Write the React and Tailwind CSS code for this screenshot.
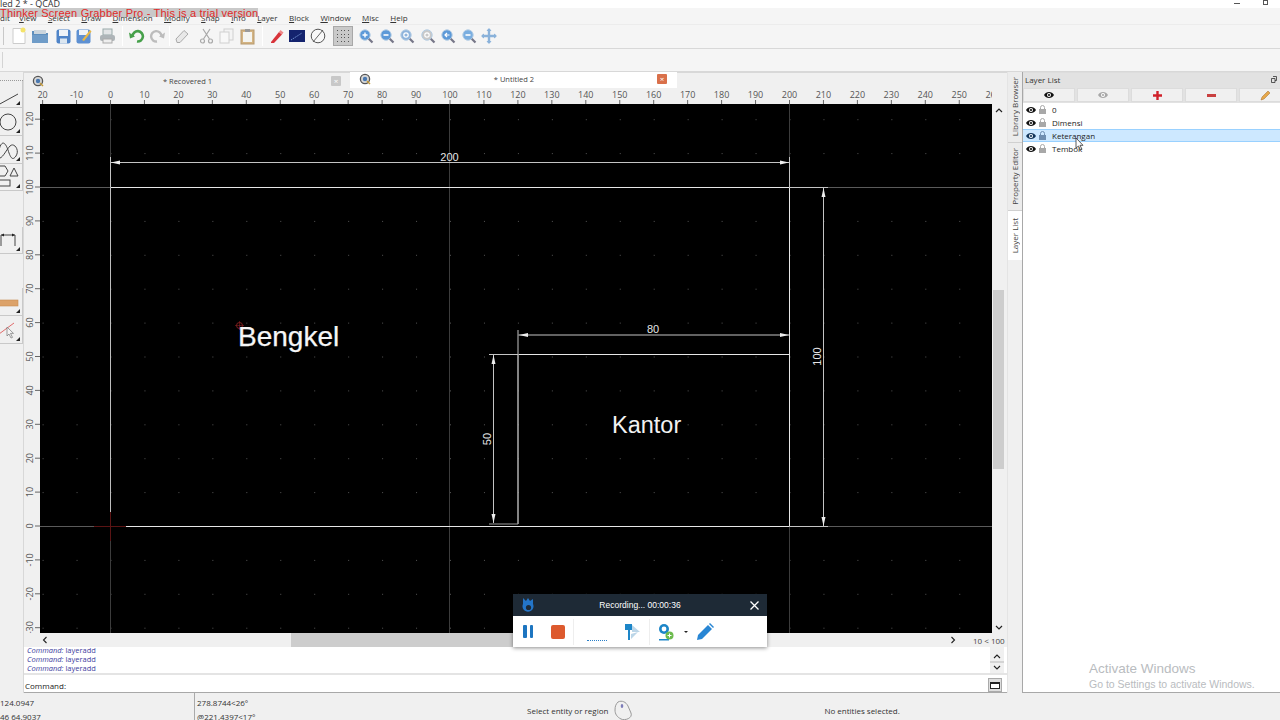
import React from "react";

const F = "font-['Open_Sans','Liberation_Sans',sans-serif]";
const X0 = 110.5, PX = 3.395, Y0 = 526, PY = 3.39;

function Sep() {
  return <div className="w-px h-[20px] bg-[#d4d4d4] border-r border-white" />;
}

function Mag({ c = "#5d9ad8", sym = "+" }) {
  return (
    <svg width="16" height="16" viewBox="0 0 16 16">
      <path d="M10 10l4.5 4.5" stroke="#778" strokeWidth="2.2" />
      <circle cx="7" cy="7" r="5.2" fill={c} stroke="#b4cde4" strokeWidth="1" />
      {sym === "+" && <path d="M4.5 7h5M7 4.5v5" stroke="#fff" strokeWidth="1.4" />}
      {sym === "-" && <path d="M4.5 7h5" stroke="#fff" strokeWidth="1.6" />}
      {sym === "o" && <circle cx="7" cy="7" r="2.2" fill="none" stroke="#fff" strokeWidth="1.2" />}
      {sym === "<" && <path d="M9.5 7H5M7 5L5 7l2 2" stroke="#fff" strokeWidth="1.2" fill="none" />}
    </svg>
  );
}

const tools = [
  <svg width="16" height="18" viewBox="0 0 16 18"><path d="M2 1.5h8l4 4v11H2z" fill="#fff" stroke="#ccc" /><circle cx="12" cy="3" r="2.5" fill="#f4e36a" /></svg>,
  <svg width="18" height="16" viewBox="0 0 18 16"><path d="M1 3h6l1 2h9v10H1z" fill="#5f8fbd" /><path d="M3 2h12v4H3z" fill="#cbd5dd" /><path d="M1 7h16v8H1z" fill="#6f9cc8" /></svg>,
  "gap3",
  <svg width="15" height="15" viewBox="0 0 15 15"><rect x=".5" y=".5" width="14" height="14" rx="2" fill="#4f84c8" /><rect x="3" y="1" width="9" height="6" fill="#eef3f8" /><rect x="4" y="9.5" width="7" height="5" fill="#dbe6f0" /></svg>,
  <svg width="16" height="16" viewBox="0 0 16 16"><rect x=".5" y="1.5" width="14" height="14" rx="2" fill="#5d90d2" /><rect x="3" y="2" width="9" height="5" fill="#eef3f8" /><path d="M6 12L14 2l1.5 1.5L8 13z" fill="#e8b845" /></svg>,
  "gap3",
  <svg width="17" height="16" viewBox="0 0 17 16"><rect x="4" y="1" width="9" height="6" fill="#e2e4e6" stroke="#9aa" /><rect x="1" y="7" width="15" height="6" rx="2" fill="#aeb4b8" /><rect x="4" y="11" width="9" height="4" fill="#eee" stroke="#aaa" /></svg>,
  "gap4",
  "sep",
  "gap4",
  <svg width="16" height="14" viewBox="0 0 16 14"><path d="M3.5 7A5.2 5.2 0 1 1 8 12.5" fill="none" stroke="#46a04a" strokeWidth="2.6" /><path d="M0 3.5l1 6 5-2z" fill="#46a04a" /></svg>,
  <svg width="16" height="14" viewBox="0 0 16 14"><path d="M12.5 7A5.2 5.2 0 1 0 8 12.5" fill="none" stroke="#bcbcbc" strokeWidth="2.4" /><path d="M16 3.5l-1 6-5-2z" fill="#bcbcbc" /></svg>,
  "gap1",
  "sep",
  "gap2",
  <svg width="14" height="15" viewBox="0 0 14 15"><path d="M1 10L9 1.5l4 3.5-8 8.5H2z" fill="#e8e8e8" stroke="#aaa" /></svg>,
  "gap4",
  <svg width="15" height="16" viewBox="0 0 15 16"><path d="M11 1L4.5 11M4 1l6.5 10" stroke="#a8a8a8" strokeWidth="1.2" /><circle cx="3.5" cy="13" r="2" fill="none" stroke="#aaa" strokeWidth="1.2" /><circle cx="11.5" cy="13" r="2" fill="none" stroke="#aaa" strokeWidth="1.2" /></svg>,
  <svg width="15" height="16" viewBox="0 0 15 16"><rect x="5" y="1" width="9" height="11" fill="#f4f4f4" stroke="#d0d0d0" /><rect x="1" y="4" width="9" height="11" fill="#f8f8f8" stroke="#d0d0d0" /></svg>,
  <svg width="15" height="17" viewBox="0 0 15 17"><rect x="1" y="2" width="13" height="14" fill="#d4b483" stroke="#b79a6e" /><rect x="3" y="4" width="9" height="10" fill="#f4f4f0" /><rect x="5" y="1" width="5" height="3" fill="#9a9a9a" /></svg>,
  "gap4",
  "sep",
  "gap4",
  <svg width="14" height="15" viewBox="0 0 14 15"><path d="M1 13L9 3l3 2.5-8 8.5H1z" fill="#d8333a" /><path d="M9 3l1.5-2 3 2.5-1.5 2z" fill="#e88" /></svg>,
  <svg width="16" height="12" viewBox="0 0 16 12"><rect width="16" height="12" fill="#14236e" /><path d="M2 10L13 3" stroke="#8db4f0" strokeWidth=".8" strokeDasharray="1.5 1" /></svg>,
  <svg width="16" height="16" viewBox="0 0 16 16"><circle cx="8" cy="8" r="6.8" fill="#f8f8f8" stroke="#555" strokeWidth="1" /><path d="M3 14L13 2" stroke="#555" strokeWidth=".9" /></svg>,
  "grid",
  <Mag sym="+" />,
  <Mag sym="-" />,
  <Mag sym="o" c="#8fb4dc" />,
  <Mag sym="o" c="#c9c9c9" />,
  <Mag sym="<" />,
  <Mag sym="-" c="#7aaee0" />,
  <svg width="16" height="16" viewBox="0 0 16 16"><path d="M8 1v14M1 8h14" stroke="#8ab2da" strokeWidth="2.4" /><path d="M8 0l2.5 3h-5zM8 16l-2.5-3h5zM0 8l3-2.5v5zM16 8l-3 2.5v-5z" fill="#8ab2da" /></svg>,
];

function Toolbar() {
  return (
    <div className="h-[23px] flex items-center pl-[3px] pb-[1px] bg-[#f5f5f5]">
      <div className="w-px h-[18px] bg-[#c8c8c8] mr-[5px]" />
      {tools.map((t, i) => {
        if (t === "gap1") return <div key={i} className="w-[1px]" />;
        if (t === "gap2") return <div key={i} className="w-[2px]" />;
        if (t === "gap3") return <div key={i} className="w-[3px]" />;
        if (t === "gap4") return <div key={i} className="w-[4px]" />;
        if (t === "sep") return <Sep key={i} />;
        if (t === "grid")
          return (
            <div key={i} className="w-[20px] h-[20px] ml-[5px] mr-[3px] bg-[#c9c9c9] border border-[#a8a8a8] grid grid-cols-4 place-items-center p-[2px]">
              {Array.from({ length: 16 }).map((_, k) => (
                <span key={k} className="w-[1px] h-[1px] bg-[#555]" />
              ))}
            </div>
          );
        return (
          <div key={i} className="w-[20.5px] h-[20px] flex items-center justify-center">
            {t}
          </div>
        );
      })}
    </div>
  );
}

const menu = ["View", "Select", "Draw", "Dimension", "Modify", "Snap", "Info", "Layer", "Block", "Window", "Misc", "Help"];

function Tile({ children, className = "" }) {
  return (
    <div className={`relative w-[23px] bg-[#f0f0f0] border-r border-b border-[#c9c9c9] overflow-hidden ${className}`}>
      {children}
      <span className="absolute right-[2px] bottom-[2px] w-0 h-0 border-l-[4px] border-l-transparent border-b-[4px] border-b-[#222]" />
    </div>
  );
}

function LeftBar() {
  return (
    <div className="w-[24px] shrink-0 bg-[#f0f0f0] border-r border-[#d8d8d8] flex flex-col">
      <div className="h-[9px] border-b border-dotted border-[#999]" />
      <Tile className="h-[27px]">
        <svg width="23" height="27" viewBox="0 0 23 27"><path d="M-2 24L18 13" stroke="#444" strokeWidth="1" /></svg>
      </Tile>
      <Tile className="h-[28px]">
        <svg width="23" height="28" viewBox="0 0 23 28"><circle cx="8" cy="14" r="8" fill="none" stroke="#444" strokeWidth="1" /></svg>
      </Tile>
      <Tile className="h-[28px]">
        <svg width="23" height="28" viewBox="0 0 23 28"><path d="M-1 14C2 2 6 8 8 14S12 26 16 20 14 6 10 10 2 24-2 22" fill="none" stroke="#444" strokeWidth="1" /></svg>
      </Tile>
      <Tile className="h-[27px]">
        <svg width="23" height="27" viewBox="0 0 23 27"><path d="M0 2h5l3 5-3 5H0" fill="none" stroke="#444" /><path d="M14 4l4 8h-8z" fill="none" stroke="#444" /><rect x="-2" y="16" width="12" height="6" fill="none" stroke="#444" /></svg>
      </Tile>
      <div className="h-[36px]" />
      <Tile className="h-[27px]">
        <svg width="23" height="27" viewBox="0 0 23 27"><path d="M1 8h14M1 19V8M15 19V8" fill="none" stroke="#444" /><path d="M1 8l3-1.5v3zM15 8l-3-1.5v3z" fill="#222" /></svg>
      </Tile>
      <div className="h-[34px]" />
      <Tile className="h-[28px]">
        <svg width="23" height="28" viewBox="0 0 23 28"><rect x="-1" y="12" width="19" height="6" fill="#dca269" stroke="#c88c50" strokeWidth=".6" /></svg>
      </Tile>
      <Tile className="h-[28px]">
        <svg width="23" height="28" viewBox="0 0 23 28"><path d="M-1 18L14 7" stroke="#e06a6a" strokeWidth="1" /><path d="M7 11l0 9 2-2 2 4 1.5-.6-2-4h3z" fill="#f4f4f4" stroke="#777" strokeWidth=".7" /></svg>
      </Tile>
      <div className="flex-1" />
    </div>
  );
}

function HRuler() {
  const ticks = [];
  for (let u = -20; u <= 260; u += 10) ticks.push(u);
  return (
    <svg width="968" height="16" viewBox="0 0 968 16" className="block">
      {ticks.map((u) => {
        const x = X0 + u * PX - 24;
        const label = u === -20 ? "20" : u;
        return (
          <g key={u}>
            <line x1={x} x2={x} y1="12" y2="16" stroke="#666" strokeWidth="1" />
            <text x={x} y="10" textAnchor="middle" fontSize="9" fill="#555" fontFamily="Open Sans">{label}</text>
          </g>
        );
      })}
    </svg>
  );
}

function VRuler() {
  const ticks = [];
  for (let u = -30; u <= 120; u += 10) ticks.push(u);
  return (
    <svg width="16" height="529" viewBox="0 0 16 529" className="block shrink-0">
      {ticks.map((u) => {
        const y = Y0 - u * PY - 104;
        return (
          <g key={u}>
            <line x1="11" x2="16" y1={y} y2={y} stroke="#666" strokeWidth="1" />
            <text transform={`translate(9 ${y}) rotate(-90)`} textAnchor="middle" fontSize="9" fill="#555" fontFamily="Open Sans">{u}</text>
          </g>
        );
      })}
    </svg>
  );
}

function Arrow({ x, y, d }) {
  const p = {
    r: `M${x} ${y}l-9-2v4z`,
    l: `M${x} ${y}l9-2v4z`,
    u: `M${x} ${y}l-2 9h4z`,
    d: `M${x} ${y}l-2-9h4z`,
  }[d];
  return <path d={p} fill="#eee" />;
}

function Drawing() {
  const O = (x) => x - 40;
  const T = (y) => y - 104;
  const dots = [];
  for (let i = -20; i <= 25; i++)
    for (let j = -3; j <= 12; j++) dots.push([X0 + i * 10 * PX - 40, Y0 - j * 10 * PY - 104]);
  const L = ({ a, b, c, d, s = "#e8e8e8", w = 1 }) => (
    <line x1={O(a)} x2={O(c)} y1={T(b)} y2={T(d)} stroke={s} strokeWidth={w} />
  );
  return (
    <svg width="952" height="529" viewBox="0 0 952 529" className="block bg-black shrink-0">
      {dots.map(([x, y], i) => (
        <rect key={i} x={x} y={y} width="1" height="1" fill="#555" />
      ))}
      <L a={40} b={187.5} c={992} d={187.5} s="#5a5a5a" />
      <L a={40} b={526.5} c={992} d={526.5} s="#5a5a5a" />
      <L a={110.5} b={104} c={110.5} d={633} s="#3c3c3c" />
      <L a={449.5} b={104} c={449.5} d={633} s="#3c3c3c" />
      <L a={789.5} b={104} c={789.5} d={633} s="#3c3c3c" />

      <L a={110.5} b={187.5} c={789.5} d={187.5} s="#e6e6e6" />
      <L a={110.5} b={526.5} c={789.5} d={526.5} s="#e6e6e6" />
      <L a={110.5} b={187.5} c={110.5} d={526.5} s="#bdbdbd" />
      <L a={789.5} b={187.5} c={789.5} d={526.5} s="#e6e6e6" />
      <L a={518.5} b={354.5} c={789.5} d={354.5} s="#e6e6e6" />
      <L a={518} b={354} c={518} d={524} s="#b0b0b0" w={1.5} />

      <L a={94} b={526.5} c={126} d={526.5} s="#5a1414" />
      <L a={110.5} b={512} c={110.5} d={541} s="#5a1414" />

      <L a={110.5} b={157} c={110.5} d={187} s="#c4c4c4" />
      <L a={789.5} b={157} c={789.5} d={187} s="#c4c4c4" />
      <L a={111} b={162.5} c={789} d={162.5} s="#c4c4c4" />
      <Arrow x={O(111)} y={T(162.5)} d="l" />
      <Arrow x={O(789)} y={T(162.5)} d="r" />
      <text x={O(449.5)} y={T(161)} textAnchor="middle" fontSize="11" fill="#e6e6e6" fontFamily="Liberation Sans">200</text>

      <L a={790} b={187.5} c={828} d={187.5} s="#c4c4c4" />
      <L a={790} b={526.5} c={828} d={526.5} s="#c4c4c4" />
      <L a={823.5} b={188} c={823.5} d={526} s="#c4c4c4" />
      <Arrow x={O(823.5)} y={T(188)} d="u" />
      <Arrow x={O(823.5)} y={T(526)} d="d" />
      <text transform={`translate(${O(821)} ${T(356.5)}) rotate(-90)`} textAnchor="middle" fontSize="11" fill="#e6e6e6" fontFamily="Liberation Sans">100</text>

      <L a={518} b={330} c={518} d={354} s="#c4c4c4" />
      <L a={518.5} b={335} c={789} d={335} s="#c4c4c4" />
      <Arrow x={O(519)} y={T(335)} d="l" />
      <Arrow x={O(789)} y={T(335)} d="r" />
      <text x={O(653)} y={T(333)} textAnchor="middle" fontSize="11" fill="#e6e6e6" fontFamily="Liberation Sans">80</text>

      <L a={489} b={354.5} c={518} d={354.5} s="#c4c4c4" />
      <L a={489} b={524} c={518} d={524} s="#9c9c9c" />
      <L a={493.5} b={355} c={493.5} d={523} s="#c4c4c4" />
      <Arrow x={O(493.5)} y={T(355)} d="u" />
      <Arrow x={O(493.5)} y={T(523)} d="d" />
      <text transform={`translate(${O(491)} ${T(439)}) rotate(-90)`} textAnchor="middle" fontSize="11" fill="#e6e6e6" fontFamily="Liberation Sans">50</text>

      <circle cx={O(239.5)} cy={T(325.5)} r="3" fill="none" stroke="#8a2020" strokeWidth=".9" />
      <path d={`M${O(235)} ${T(325.5)}h9M${O(239.5)} ${T(321)}v9`} stroke="#8a2020" strokeWidth=".6" />
      <text x={O(238)} y={T(346)} fontSize="28" fill="#f6f6f6" stroke="#f6f6f6" strokeWidth=".25" fontFamily="Liberation Sans">Bengkel</text>
      <text x={O(612)} y={T(433)} fontSize="23.5" fill="#f2f2f2" fontFamily="Liberation Sans">Kantor</text>
    </svg>
  );
}

function Logo() {
  return (
    <svg width="12" height="12" viewBox="0 0 12 12">
      <circle cx="6" cy="6" r="4.6" fill="#d7d7d7" stroke="#555" strokeWidth="1.3" />
      <circle cx="6" cy="6" r="2.2" fill="#4a78b0" />
      <path d="M8 8l3 3" stroke="#c49a3a" strokeWidth="1.5" />
    </svg>
  );
}

function Tabs() {
  return (
    <div className="h-[16px] flex bg-[#f0f0f0] text-[7.5px] text-[#444] leading-[16px]">
      <div className="w-[326px] bg-[#f0f0f0] border-t border-[#d8d8d8] flex items-center pl-[8px]">
        <Logo />
        <div className="flex-1 text-center">* Recovered 1</div>
        <div className="w-[10px] h-[10px] mr-[9px] bg-[#c8c8c8] rounded-[1px] text-white text-[8px] leading-[10px] text-center">×</div>
      </div>
      <div className="w-[327px] bg-white flex items-center pl-[9px] pb-[2px]">
        <Logo />
        <div className="flex-1 text-center">* Untitled 2</div>
        <div className="w-[10px] h-[10px] mr-[10px] bg-[#d9704a] rounded-[1px] text-white text-[8px] leading-[10px] text-center">×</div>
      </div>
      <div className="flex-1 border-t border-[#d8d8d8]" />
    </div>
  );
}

function VScroll() {
  return (
    <div className="w-[15px] shrink-0 bg-[#f0f0f0] flex flex-col pl-[1px]">
      <div className="h-[186px] w-[11px] flex justify-center pt-[3px]">
        <svg width="8" height="6" viewBox="0 0 8 6"><path d="M1 5l3-3 3 3" fill="none" stroke="#222" strokeWidth="1.2" /></svg>
      </div>
      <div className="w-[11px] h-[179px] bg-[#cdcdcd]" />
      <div className="flex-1" />
      <div className="w-[11px] flex justify-center mb-[2px]">
        <svg width="8" height="6" viewBox="0 0 8 6"><path d="M1 1l3 3 3-3" fill="none" stroke="#222" strokeWidth="1.2" /></svg>
      </div>
    </div>
  );
}

function CommandArea() {
  return (
    <div className="flex flex-col text-[7.5px] leading-[9px]">
      <div className="h-[14px] flex items-center bg-[#f0f0f0] relative">
        <span className="ml-[18px] w-[9px]">
          <svg width="6" height="8" viewBox="0 0 6 8"><path d="M4.5 1L1.5 4l3 3" fill="none" stroke="#222" strokeWidth="1.1" /></svg>
        </span>
        <div className="w-[236px] ml-[240px] h-[14px] bg-[#cdcdcd]" />
        <div className="flex-1" />
        <svg className="mr-[17px]" width="6" height="8" viewBox="0 0 6 8"><path d="M1.5 1l3 3-3 3" fill="none" stroke="#222" strokeWidth="1.1" /></svg>
        <span className="w-[34px] text-[#444] text-[8px] whitespace-nowrap">10 &lt; 100</span>
      </div>
      <div className="h-[28px] bg-white flex border-b-2 border-[#e4e4e4] overflow-hidden">
        <div className="flex-1 mt-[-1px] pl-[3px] text-[#3d3d9e] h-[27px]">
          {[0, 1, 2].map((i) => (
            <div key={i} className="h-[9px]">
              <i>Command:</i> layeradd
            </div>
          ))}
        </div>
        <div className="w-[14px] bg-[#f0f0f0] flex flex-col items-center justify-between pt-[6px] pb-[2px] mr-[3px]">
          <svg width="8" height="6" viewBox="0 0 8 6"><path d="M1 5l3-3 3 3" fill="none" stroke="#222" strokeWidth="1.1" /></svg>
          <div className="w-full h-[2px] bg-[#d4d4d4]" />
          <svg width="8" height="6" viewBox="0 0 8 6"><path d="M1 1l3 3 3-3" fill="none" stroke="#222" strokeWidth="1.1" /></svg>
        </div>
      </div>
      <div className="h-[18px] bg-white flex items-end pl-[1px] text-[#222] border-b border-[#a8a8a8]">
        <span className="flex-1 pb-[2px] text-[8px]">Command:</span>
        <div className="w-[14px] h-[14px] bg-[#dedede] border border-[#aaa] mr-[5px] flex items-center justify-center">
          <span className="w-[10px] h-[7px] border border-[#222] border-t-2 bg-white" />
        </div>
      </div>
    </div>
  );
}

function Eye({ c = "#111" }) {
  return (
    <svg width="10" height="8" viewBox="0 0 10 8">
      <path d="M0 4C2 0 8 0 10 4 8 8 2 8 0 4z" fill={c} />
      <circle cx="5" cy="4" r="2" fill="#fff" />
      <circle cx="5" cy="4" r="1.1" fill={c} />
    </svg>
  );
}
function Lock({ c = "#a8a8a8" }) {
  return (
    <svg width="7" height="9" viewBox="0 0 7 9">
      <path d="M1.5 4V2.5a2 2 0 0 1 4 0V4" fill="none" stroke={c} strokeWidth="1" />
      <rect y="4" width="7" height="5" fill={c} />
    </svg>
  );
}

function LayerPanel() {
  const rows = ["0", "Dimensi", "Keterangan", "Tembok"];
  const btns = [
    <Eye />,
    <Eye c="#a8a8a8" />,
    <svg width="9" height="9" viewBox="0 0 9 9"><path d="M4.5 0v9M0 4.5h9" stroke="#d0212a" strokeWidth="2.4" /></svg>,
    <svg width="9" height="3" viewBox="0 0 9 3"><rect width="9" height="3" fill="#c94040" /></svg>,
    <svg width="11" height="11" viewBox="0 0 11 11"><path d="M1 10l1-3 6-6 2 2-6 6z" fill="#e6a84a" stroke="#a56a2a" strokeWidth=".5" /></svg>,
  ];
  return (
    <div className="w-[258px] shrink-0 flex flex-col text-[8px] bg-white border-b border-[#a8a8a8] border-l">
      <div className="h-[16px] bg-[#e2e2e2] flex items-center justify-between pl-[2px] pr-[3px] pb-[2px] border-t border-[#ddd] text-[#333]">
        <span>Layer List</span>
        <svg width="6" height="7" viewBox="0 0 6 7"><path d="M2 .5h3.5v4H4M.5 2.5h3.5v4H.5z" fill="none" stroke="#333" strokeWidth=".8" /></svg>
      </div>
      <div className="h-[15px] bg-[#e2e2e2] flex gap-[2px] overflow-hidden pb-[1px]">
        {btns.map((b, i) => (
          <div key={i} className="w-[52px] shrink-0 bg-[#f0f0f0] border border-[#dcdcdc] flex items-center justify-center">
            {b}
          </div>
        ))}
      </div>
      <div className="flex-1 relative text-[#222]">
        {rows.map((r, i) => (
          <div key={r} className={`h-[13px] flex items-center pl-[3px] ${i === 2 ? "bg-[#cde8ff] border-y border-[#99d1ff]" : ""}`}>
            <Eye c={i === 2 ? "#12355a" : "#111"} />
            <span className="w-[3px]" />
            <Lock c={i === 2 ? "#6f8eb0" : "#a8a8a8"} />
            <span className="ml-[6px] text-[8px]">{r}</span>
          </div>
        ))}
        <svg className="absolute left-[52px] top-[34px]" width="10" height="14" viewBox="0 0 10 14">
          <path d="M1 1v10l2.5-2 2 4 1.5-.7-2-4H8z" fill="#fff" stroke="#333" strokeWidth=".8" />
        </svg>
        <div className="absolute left-[66px] top-[557px] text-[#b9bcc0]">
          <div className="text-[13.5px] leading-[17px] font-['Liberation_Sans',sans-serif]">Activate Windows</div>
          <div className="text-[10.5px] leading-[14px] font-['Liberation_Sans',sans-serif]">Go to Settings to activate Windows.</div>
        </div>
      </div>
    </div>
  );
}

function SideTabs() {
  const V = "[writing-mode:vertical-rl] rotate-180";
  return (
    <div className="w-[15px] shrink-0 bg-[#e4e4e4] flex flex-col text-[8px] text-[#444] pl-[1px]">
      <div className="h-[71px] flex items-center justify-center border-b border-[#d0d0d0] bg-[#ececec]">
        <span className={V}>Library Browser</span>
      </div>
      <div className="h-[68px] flex items-center justify-center bg-[#ececec] border-b border-[#d0d0d0]">
        <span className={V}>Property Editor</span>
      </div>
      <div className="h-[49px] flex items-center justify-center bg-white">
        <span className={V}>Layer List</span>
      </div>
      <div className="flex-1 bg-[#f0f0f0]" />
    </div>
  );
}

function Recorder() {
  return (
    <div className="absolute left-[513px] top-[594px] w-[254px] h-[53px] shadow-[0_1px_4px_rgba(0,0,0,0.45)] bg-white font-['Liberation_Sans',sans-serif]">
      <div className="h-[22px] bg-[#1e2a36] flex items-center justify-between text-white text-[8.5px] relative">
        <svg className="ml-[9px]" width="13" height="15" viewBox="0 0 13 15">
          <path d="M1 5V0l3 3 2-3 2 3 3-2v5a5.5 5.5 0 1 1-10 0z" fill="#2475c8" />
          <circle cx="6.5" cy="9.5" r="2.6" fill="#1e2a36" />
        </svg>
        <span className="absolute left-0 right-0 text-center">Recording... 00:00:36</span>
        <svg className="mr-[8px]" width="9" height="9" viewBox="0 0 9 9"><path d="M.5.5l8 8M8.5.5l-8 8" stroke="#fff" strokeWidth="1.3" /></svg>
      </div>
      <div className="h-[31px] flex items-center">
        <div className="w-[10px]" />
        <div className="flex gap-[3px] w-[10px]">
          <span className="w-[3.5px] h-[13px] bg-[#1d75c0] rounded-[1px]" />
          <span className="w-[3.5px] h-[13px] bg-[#1d75c0] rounded-[1px]" />
        </div>
        <div className="w-[18px]" />
        <div className="w-[14px] h-[14px] rounded-[2px] bg-[#dd5a2e]" />
        <div className="w-[8px]" />
        <div className="w-px h-[26px] bg-[#eee]" />
        <div className="w-[13px]" />
        <div className="w-[20px] h-[8px] mt-[10px] border-b border-dotted border-[#2a7fc8]" />
        <div className="w-[17px]" />
        <svg width="16" height="18" viewBox="0 0 16 18">
          <path d="M1 1h7v6H6v10H4V7H1z" fill="#1d86c8" />
          <path d="M8 2l8 7H8zM7 11l7-2-7 7z" fill="#bcd6e8" />
        </svg>
        <div className="w-[9px]" />
        <div className="w-px h-[26px] bg-[#eee]" />
        <div className="w-[7px]" />
        <svg width="17" height="18" viewBox="0 0 17 18">
          <circle cx="7" cy="6" r="5" fill="#1d86c8" />
          <circle cx="7" cy="6" r="2.4" fill="#fff" />
          <path d="M2 16h10v1.5H2z" fill="#1d86c8" />
          <circle cx="12.5" cy="12.5" r="4" fill="#6dbb4e" />
          <path d="M10.5 12.5h4M12.5 10.5v4" stroke="#fff" strokeWidth="1" />
        </svg>
        <div className="w-[10px]" />
        <span className="w-0 h-0 border-x-[2px] border-x-transparent border-t-[2px] border-t-[#222]" />
        <div className="w-[9px]" />
        <svg width="17" height="17" viewBox="0 0 17 17">
          <path d="M0 17l1-5L11 2l4 4L5 16z" fill="#2886d4" />
          <path d="M12 1l1-1 4 4-1 1z" fill="#2886d4" />
        </svg>
      </div>
    </div>
  );
}

export default function App() {
  return (
    <div className={`relative w-[1280px] h-[720px] overflow-hidden bg-[#f0f0f0] flex flex-col ${F}`}>
      <div className="h-[8px] bg-white text-[9px] leading-[7px] text-[#333] flex justify-between pr-[12px]">
        <span>led 2 * - QCAD</span>
        <div className="flex gap-[23px] items-start">
          <span className="w-[6px] h-px bg-[#555] mt-[3px]" />
          <span className="w-[5px] h-[5px] border border-[#555]" />
        </div>
      </div>
      <div className="h-[17px] bg-[#f5f5f5] flex items-center text-[8px] text-[#333] pt-[3px] border-b border-[#ececec]">
        <span className="w-[19px] shrink-0">dit</span>
        {menu.map((m) => (
          <span key={m} className="mr-[11.4px]">
            <span className="underline">{m[0]}</span>
            {m.slice(1)}
          </span>
        ))}
      </div>
      <Toolbar />
      <div className="h-[24px] bg-[#f5f5f5] border-y border-[#d8d8d8] flex items-center pl-[2px]">
        <div className="w-px h-[16px] bg-[#d4d4d4]" />
      </div>

      <div className="flex-1 min-h-0 flex">
        <LeftBar />
        <div className="flex-1 min-w-0 flex flex-col">
          <Tabs />
          <HRuler />
          <div className="flex">
            <VRuler />
            <Drawing />
            <VScroll />
          </div>
          <CommandArea />
        </div>
        <SideTabs />
        <LayerPanel />
      </div>

      <div className="h-[27px] flex text-[8px] text-[#333] bg-[#f0f0f0]">
        <div className="w-[195px] border-r border-[#aaa] leading-[14px] pt-[3px]">
          <div>124.0947</div>
          <div>46 64.9037</div>
        </div>
        <div className="w-[332px] pl-[2px] leading-[14px] pt-[3px]">
          <div>278.8744&lt;26°</div>
          <div>@221.4397&lt;17°</div>
        </div>
        <div className="flex items-start pt-[12px] leading-[12px]">
          <span>Select entity or region</span>
          <svg className="ml-[6px] mt-[-5px]" width="19" height="21" viewBox="0 0 19 21">
            <path d="M4 2c4-2 8 0 10 4l3 7c2 5-6 8-10 6-4-2-6-5-6-9 0-4 1-6 3-8z" fill="#f0f0f0" stroke="#999" />
            <ellipse cx="8" cy="6" rx="1.3" ry="2" fill="#7d7db8" />
          </svg>
          <span className="ml-[191px]">No entities selected.</span>
        </div>
      </div>

      <div className="absolute left-0 top-[8px] h-[9px] w-[258px] bg-[#c9c9c9] text-[#e02a2a] text-[11px] leading-[10px] tracking-[0.2px] whitespace-nowrap font-['Liberation_Sans',sans-serif]">
        Thinker Screen Grabber Pro - This is a trial version
      </div>
      <Recorder />
    </div>
  );
}
